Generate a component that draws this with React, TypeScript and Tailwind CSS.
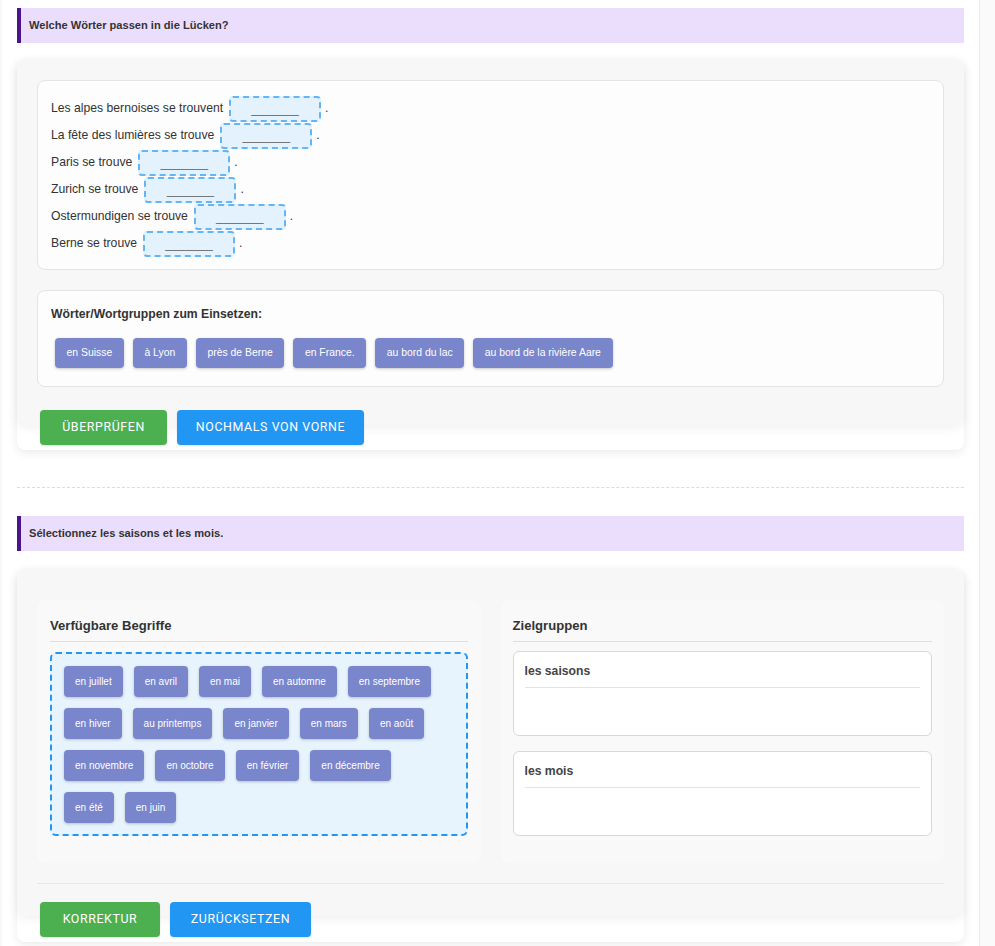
import React from 'react';

const sentences = [
  'Les alpes bernoises se trouvent',
  'La fête des lumières se trouve',
  'Paris se trouve',
  'Zurich se trouve',
  'Ostermundigen se trouve',
  'Berne se trouve',
];

const words = ['en Suisse', 'à Lyon', 'près de Berne', 'en France.', 'au bord du lac', 'au bord de la rivière Aare'];

const terms = [
  'en juillet', 'en avril', 'en mai', 'en automne', 'en septembre',
  'en hiver', 'au printemps', 'en janvier', 'en mars', 'en août',
  'en novembre', 'en octobre', 'en février', 'en décembre',
  'en été', 'en juin',
];

const groups = ['les saisons', 'les mois'];

function TaskBanner({ children }: { children: React.ReactNode }) {
  return (
    <div className="h-[35px] flex items-center bg-[#ebdefd] border-l-[4px] border-[#4a148c] pl-[8px]">
      <span className="text-[11.1px] font-bold text-[#333]">{children}</span>
    </div>
  );
}

function Chip({ label, tall }: { label: string; tall?: boolean }) {
  return (
    <span
      className={
        tall
          ? 'h-[31px] px-[11px] flex items-center rounded-[4px] bg-[#7986cb] text-white text-[10px] shadow-[0_1px_3px_rgba(0,0,0,0.22)]'
          : 'h-[30px] px-[11.6px] flex items-center rounded-[4px] bg-[#7986cb] text-white text-[10.4px] shadow-[0_1px_3px_rgba(0,0,0,0.22)]'
      }
    >
      {label}
    </span>
  );
}

function ActionButton({ label, color, width }: { label: string; color: 'green' | 'blue'; width: string }) {
  return (
    <button
      className={
        (color === 'green' ? 'bg-[#4caf50] ' : 'bg-[#2196f3] ') +
        width +
        ' h-[35px] rounded-[4px] text-white text-[12.4px] tracking-[0.6px] uppercase font-["Roboto",sans-serif] shadow-[0_1px_2px_rgba(0,0,0,0.12)]'
      }
    >
      {label}
    </button>
  );
}

function GapExercise() {
  return (
    <div className="mt-[17px] bg-white rounded-[8px] shadow-[0_3px_10px_rgba(0,0,0,0.08)]">
      <div className="bg-[#f7f7f7] rounded-[8px] px-5 pt-5 pb-[38px] shadow-[0_2px_12px_rgba(0,0,0,0.07)]">
        <div className="bg-[#fdfdfd] border border-[#e4e4e4] rounded-[8px] pl-[13px] pt-[14px] pb-[12px]">
          {sentences.map((s) => (
            <div key={s} className="h-[27px] flex items-center text-[12.2px] text-[#333]">
              <span>{s}</span>
              <span className="ml-[6px] w-[92px] h-[26px] flex items-center justify-center pt-[2px] rounded-[4px] border-2 border-dashed border-[#64b5f6] bg-[#e3f2fd] text-[#666]">
                _______
              </span>
              <span className="ml-[4px]">.</span>
            </div>
          ))}
        </div>
        <div className="mt-5 bg-[#fdfdfd] border border-[#e4e4e4] rounded-[8px] pl-[13px] pt-[15px] pb-[18px]">
          <div className="h-[16px] flex items-center text-[12.2px] font-bold text-[#333]">
            Wörter/Wortgruppen zum Einsetzen:
          </div>
          <div className="mt-[16px] pl-[4px] flex flex-wrap gap-[9px]">
            {words.map((w) => (
              <Chip key={w} label={w} />
            ))}
          </div>
        </div>
      </div>
      <div className="relative -mt-[15px] pl-[23px] pb-[5px] flex gap-[10px]">
        <ActionButton label="Überprüfen" color="green" width="w-[127px]" />
        <ActionButton label="Nochmals von vorne" color="blue" width="w-[187px]" />
      </div>
    </div>
  );
}

function SortExercise() {
  return (
    <div className="mt-[19px] bg-white rounded-[8px] shadow-[0_3px_10px_rgba(0,0,0,0.08)]">
      <div className="bg-[#f7f7f7] rounded-[8px] px-5 pt-[30px] pb-[32px] shadow-[0_2px_12px_rgba(0,0,0,0.07)]">
        <div className="grid grid-cols-2 gap-5">
          <div className="bg-[#f9f9f9] rounded-[8px] px-[13px] pt-[18px] pb-[27px]">
            <div className="pb-[7px] border-b border-[#dedede] text-[13.1px] font-bold text-[#333] leading-[16px]">
              Verfügbare Begriffe
            </div>
            <div className="mt-[10px] h-[184px] rounded-[6px] border-2 border-dashed border-[#2196f3] bg-[#e8f4fd] pl-[12px] pr-[22px] pt-[12px] flex flex-wrap content-start gap-[11px]">
              {terms.map((t) => (
                <Chip key={t} label={t} tall />
              ))}
            </div>
          </div>
          <div className="bg-[#f9f9f9] rounded-[8px] px-[12px] pt-[18px] pb-[27px]">
            <div className="pb-[7px] border-b border-[#dedede] text-[13.1px] font-bold text-[#333] leading-[16px]">
              Zielgruppen
            </div>
            <div className="mt-[9px] flex flex-col gap-[15px]">
              {groups.map((g) => (
                <div key={g} className="h-[85px] rounded-[6px] border border-[#d8d8d8] bg-white px-[11px] pt-[12px]">
                  <div className="pb-[8px] border-b border-[#e2e2e2] text-[12.2px] font-bold text-[#444] leading-[15px]">
                    {g}
                  </div>
                </div>
              ))}
            </div>
          </div>
        </div>
        <div className="mt-5 border-t border-[#e8e8e8]" />
      </div>
      <div className="relative -mt-[14px] pl-[23px] pb-[5px] flex gap-[10px]">
        <ActionButton label="Korrektur" color="green" width="w-[120px]" />
        <ActionButton label="Zurücksetzen" color="blue" width="w-[141px]" />
      </div>
    </div>
  );
}

export default function App() {
  return (
    <div className="h-screen overflow-hidden flex bg-white font-['Liberation_Sans',Arial,sans-serif]">
      <main className="flex-1 pl-[17px] pr-[15px] pt-[8px] shadow-[inset_3px_0_3px_-2px_rgba(0,0,0,0.06)]">
        <TaskBanner>Welche Wörter passen in die Lücken?</TaskBanner>
        <GapExercise />
        <div className="mt-[37px] border-t border-dashed border-[#dcdcdc]" />
        <div className="mt-[28px]">
          <TaskBanner>Sélectionnez les saisons et les mois.</TaskBanner>
        </div>
        <SortExercise />
      </main>
      <div className="w-[16px] shrink-0 border-l border-[#ececec] bg-[#fafafa]" />
    </div>
  );
}
